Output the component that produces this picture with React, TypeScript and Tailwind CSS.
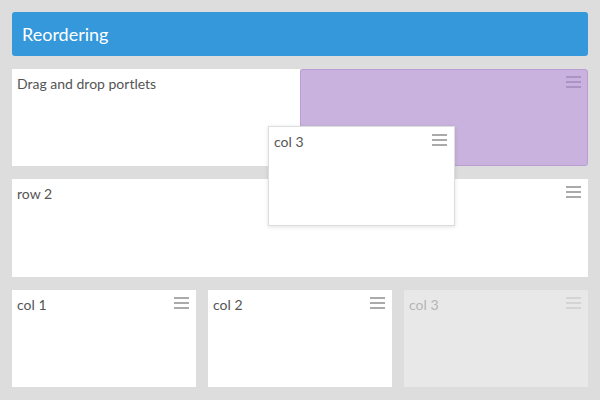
import type { ReactNode } from "react";

function Grip({ color = "bg-[#aaaaaa]", className = "right-[7px] top-[7px]" }: { color?: string; className?: string }) {
  return (
    <div className={`absolute flex w-[15px] flex-col gap-[3px] ${className}`}>
      <span className={`block h-[2px] ${color}`} />
      <span className={`block h-[2px] ${color}`} />
      <span className={`block h-[2px] ${color}`} />
    </div>
  );
}

function Portlet({
  title,
  className = "",
  muted = false,
  grip = true,
}: {
  title: ReactNode;
  className?: string;
  muted?: boolean;
  grip?: boolean;
}) {
  return (
    <div
      className={`relative px-[5px] pt-[5px] text-[14px] leading-[20px] ${
        muted ? "bg-[#e8e8e8] text-[#b5b5b5]" : "bg-white text-[#555555]"
      } ${className}`}
    >
      {title}
      {grip && <Grip color={muted ? "bg-[#d4d4d4]" : "bg-[#aaaaaa]"} />}
    </div>
  );
}

export default function App() {
  return (
    <div
      className="relative flex h-[400px] w-[600px] flex-col bg-[#dddddd] px-3 pt-3"
      style={{ fontFamily: "Lato, 'Noto Sans', sans-serif" }}
    >
      <div className="flex h-[44px] items-center rounded-[3px] bg-[#3498db] px-[10px] text-[18px] text-white">
        Reordering
      </div>

      <div className="mt-[13px] flex h-[97px]">
        <Portlet title="Drag and drop portlets" className="w-[288px]" grip={false} />
        {/* drop placeholder */}
        <div className="relative flex-1 rounded-[3px] border border-[#b99dd3] bg-[#c9b3de]">
          <Grip color="bg-[#ab93c6]" className="right-[6px] top-[6px]" />
        </div>
      </div>

      <Portlet title="row 2" className="mt-[13px] h-[98px]" />

      <div className="mt-[13px] grid h-[97px] grid-cols-3 gap-3">
        <Portlet title="col 1" />
        <Portlet title="col 2" />
        <Portlet title="col 3" muted />
      </div>

      {/* portlet being dragged */}
      <div className="absolute left-[268px] top-[126px] h-[100px] w-[187px] border border-[#dddddd] bg-white px-[5px] pt-[5px] text-[14px] leading-[20px] text-[#555555] shadow-[0_1px_4px_rgba(0,0,0,0.12)]">
        col 3
        <Grip />
      </div>
    </div>
  );
}
